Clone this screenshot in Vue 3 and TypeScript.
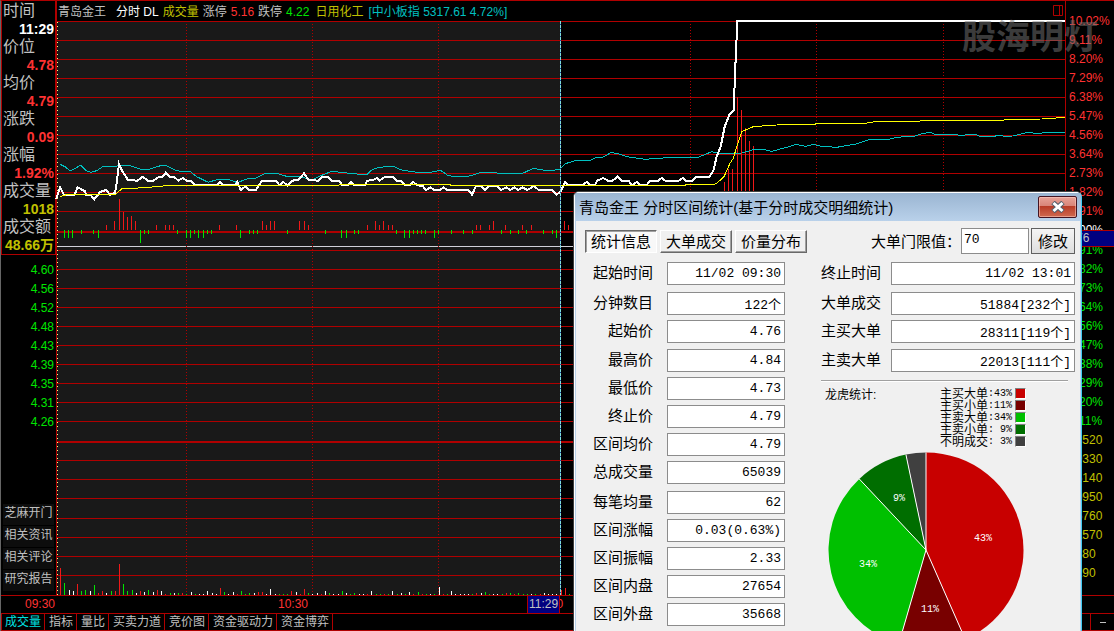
<script setup lang="ts">
import { ref } from 'vue'

type Tone = 'r' | 'g' | 'w'
interface Bar { x: number; top: number; height: number; tone: Tone }

// The plot is drawn on a grid of three units per pixel.
const upperRows = [64, 121, 178, 235, 292, 349, 406, 463, 520, 577, 634]
const lowerRows = [751, 808, 865, 922, 979, 1036, 1093, 1150, 1207, 1264]
const volumeRows = [1381, 1438, 1495, 1555, 1612, 1669, 1726]
const gridRows = [...upperRows, ...lowerRows, ...volumeRows].map((y) => Math.floor(y / 3) * 3 + 1.5)
const gridColumns = [559.5, 937.5, 1315.5, 2071.5, 2449.5, 2830.5]

const priceLine = '168,598 180,562 192,584 224,584 233,562 255,574 258,584 273,586 283,598 300,576 318,570 330,584 345,578 350,550 357,492 366,512 384,540 412,542 428,530 444,542 460,542 478,530 488,530 497,518 508,530 524,532 535,542 548,534 560,542 574,542 585,556 650,556 660,546 672,556 705,556 712,546 722,570 736,560 748,570 768,570 786,542 828,542 838,556 840,556 850,546 862,556 876,542 895,540 912,520 926,540 955,542 965,532 985,532 995,542 1016,542 1028,556 1043,556 1052,546 1062,556 1094,556 1102,542 1120,540 1130,534 1138,542 1156,530 1178,530 1190,542 1204,542 1214,556 1230,556 1240,546 1252,556 1268,558 1278,570 1292,562 1302,570 1320,570 1330,562 1342,570 1405,570 1416,584 1428,558 1444,558 1456,570 1468,558 1490,558 1504,570 1519,562 1530,570 1543,562 1555,570 1568,562 1582,570 1602,558 1616,570 1656,570 1670,584 1682,574 1696,546 1706,556 1748,556 1760,546 1770,556 1784,556 1792,542 1810,534 1824,542 1838,542 1852,530 1866,542 1886,542 1896,556 1910,546 1922,556 1940,556 1950,542 1974,542 1985,534 1996,542 2036,542 2048,534 2058,542 2076,542 2088,530 2128,530 2140,512 2150,470 2162,440 2174,380 2188,345 2201,330 2206,200 2212,63 3195,63'
const averageLine = '180,590 200,584 345,584 365,567 430,563 480,559 500,556.5 1015,556.5 1020,553.5 1350,553.5 1352,556.5 2055,556.5 2058,553.5 2140,553.5 2150,550 2172,530 2190,490 2200,475 2210,440 2225,395 2260,380 2330,375 2445,373 2448,370 2595,370 2625,365 2760,364 2762,361 3010,361 3015,358 3125,357 3195,352'
const indexLine = '180,493 195,500 210,512 225,506 238,497 244,497 258,512 272,517 290,512 310,499 340,501 357,496 388,496 420,507 450,507 485,496 500,498 530,512 550,515 572,516 590,530 625,547 650,539 690,540 712,548 745,535 765,535 795,520 830,520 860,529 900,530 936,540 960,528 995,514 1030,518 1070,522 1102,523 1115,510 1135,502 1180,499 1200,509 1250,517 1290,517 1322,511 1342,525 1355,529 1405,529 1445,517 1490,519 1570,519 1600,505 1640,512 1678,509 1696,491 1730,481 1772,481 1790,472 1810,471 1832,458 1850,460 1880,470 1935,478 1970,475 2030,472 2090,474 2135,455 2155,460 2225,459 2260,449 2295,449 2315,454 2360,442 2388,433 2418,439 2440,433 2465,439 2510,442 2550,435 2568,432 2610,418 2660,420 2690,412 2746,408 2765,401 2790,397 2805,403 2860,403 2880,406 2925,403 2940,409 2980,409 3000,406 3015,409 3038,408 3080,398 3120,400 3140,397 3195,397'

const snap = (v: number) => Math.floor(v / 3) * 3

function parse(source: string): Array<[number, number]> {
  return source.split(' ').map((pair) => {
    const [x, y] = pair.split(',').map(Number)
    return [x, y]
  })
}

const rises = '319,675 343,663 358,597 370,636 382,651 394,648 406,663 469,675 496,675 508,675 520,675 658,675 709,675 787,663 799,675 811,663 823,663 898,663 913,663 925,675 1102,675 1126,663 1138,675 1150,663 1165,675 1177,675 1429,675 1441,675 1468,675 1480,663 1516,675 1567,675 1594,675 1693,663 1705,675 2173,545 2185,507 2197,507 2212,291 2224,330 2236,384 2248,422 2260,437'
const falls = '193,713 205,713 217,713 244,702 280,702 295,713 421,728 433,702 445,702 532,702 559,713 571,713 583,702 595,713 610,713 622,702 634,702 721,713 748,702 760,702 772,702 862,702 976,702 1024,713 1039,713 1063,702 1075,702 1189,702 1213,713 1228,713 1240,702 1252,702 1264,702 1276,702 1303,713 1315,702 1354,702 1390,702 1417,702 1504,702 1531,702 1555,702 1579,702 1630,702 1657,702 1669,713'
const momentum: Bar[] = [
  ...parse(rises).map(([x, y]): Bar => ({ x: snap(x), top: y, height: 690 - y, tone: 'r' })),
  ...parse(falls).map(([x, y]): Bar => ({ x: snap(x), top: 690, height: y - 690, tone: 'g' })),
]

const volumes = 'r181,81 g193,36 w208,15 w220,12 r232,33 g244,12 g256,15 w271,12 g283,30 r295,6 r307,12 w319,6 g334,12 r346,12 r358,93 g370,33 g382,12 g397,15 w409,6 r421,12 w433,9 g445,15 w460,9 r472,15 w484,12 r496,3 g511,6 w523,6 g535,6 r547,6 g559,3 w574,9 g586,3 w598,3 w610,3 w622,12 w637,6 w649,3 r661,21 g673,9 w685,3 w700,9 r712,3 g724,12 g736,3 g748,6 w763,6 r775,9 r787,9 w799,3 w811,18 w826,3 g838,3 g850,3 g862,3 r874,12 w889,9 r901,3 r913,18 g925,6 w937,3 w952,6 r964,3 w976,12 g988,6 w1000,3 w1015,3 g1027,12 w1039,6 g1051,3 g1063,6 w1078,3 w1090,3 r1102,3 w1114,12 g1129,3 g1141,3 r1153,3 g1165,3 w1177,12 g1192,3 w1204,6 g1216,3 w1228,9 r1240,3 g1255,9 r1267,3 g1279,3 w1291,3 g1303,3 w1318,24 r1330,3 g1342,3 w1354,12 w1366,3 w1381,3 w1393,3 w1405,3 g1417,3 r1429,6 w1444,6 g1456,9 g1468,3 w1480,3 w1492,3 g1507,3 r1519,6 g1531,6 r1543,3 g1555,6 g1570,3 g1582,3 w1594,3 g1606,3 r1621,3 w1633,6 w1645,3 w1657,3 w1669,3 r1684,15 r1696,21 g1708,3'
const volumeBars: Bar[] = volumes.split(' ').map((item) => {
  const [x, height] = item.slice(1).split(',').map(Number)
  return { x: snap(x), top: 1785 - height, height, tone: item[0] as Tone }
})

const readings = [
  { label: '时间', value: '11:29', tone: 'white' },
  { label: '价位', value: '4.78', tone: 'red' },
  { label: '均价', value: '4.79', tone: 'red' },
  { label: '涨跌', value: '0.09', tone: 'red' },
  { label: '涨幅', value: '1.92%', tone: 'red' },
  { label: '成交量', value: '1018', tone: 'yellow' },
  { label: '成交额', value: '48.66万', tone: 'yellow' },
]
const prices = ['4.60', '4.56', '4.52', '4.48', '4.43', '4.39', '4.35', '4.31', '4.26']
const shortcuts = ['芝麻开门', '相关资讯', '相关评论', '研究报告']
const gains = ['10.02%', '9.11%', '8.20%', '7.29%', '6.38%', '5.47%', '4.56%', '3.64%', '2.73%', '1.82%', '0.91%']
const losses = ['0.91%', '1.82%', '2.73%', '3.64%', '4.56%', '5.47%', '6.38%', '7.29%', '8.20%', '9.11%']
const volumeScale = ['33520', '29330', '25140', '20950', '16760', '12570', '8380', '4190']
const indicatorTabs = ['成交量', '指标', '量比', '买卖力道', '竞价图', '资金驱动力', '资金博弈']
const activeIndicator = ref('成交量')

const dialogTabs = ['统计信息', '大单成交', '价量分布']
const activeTab = ref('统计信息')
const threshold = ref('70')

const leftGroups = [
  [['起始时间', '11/02 09:30']],
  [['分钟数目', '122个'], ['起始价', '4.76']],
  [['最高价', '4.84'], ['最低价', '4.73'], ['终止价', '4.79'], ['区间均价', '4.79'], ['总成交量', '65039']],
  [['每笔均量', '62'], ['区间涨幅', '0.03(0.63%)'], ['区间振幅', '2.33'], ['区间内盘', '27654'], ['区间外盘', '35668']],
]
const rightGroups = [
  [['终止时间', '11/02 13:01']],
  [['大单成交', '51884[232个]'], ['主买大单', '28311[119个]']],
  [['主卖大单', '22013[111个]']],
]

const slices = [
  { name: '主买大单', share: '43%', color: '#c80000', from: 0, to: 43.4, x: 155, y: 89 },
  { name: '主买小单', share: '11%', color: '#780000', from: 43.4, to: 54.5, x: 102, y: 160 },
  { name: '主卖大单', share: '34%', color: '#00c000', from: 54.5, to: 88, x: 40, y: 115 },
  { name: '主卖小单', share: '9%', color: '#006e00', from: 88, to: 96.7, x: 71, y: 49 },
  { name: '不明成交', share: '3%', color: '#404040', from: 96.7, to: 100, x: 0, y: 0 },
]
function rim(percent: number): string {
  const a = (percent / 100) * Math.PI * 2
  return `${(98 + 97.5 * Math.sin(a)).toFixed(2)} ${(98 - 97.5 * Math.cos(a)).toFixed(2)}`
}
const wedge = (from: number, to: number) => `M98 98L${rim(from)}A97.5 97.5 0 0 1 ${rim(to)}Z`
</script>

<template>
  <main class="terminal">
    <aside class="side">
      <dl class="readings">
        <template v-for="r in readings" :key="r.label">
          <dt>{{ r.label }}</dt>
          <dd :class="r.tone">{{ r.value }}</dd>
        </template>
      </dl>
      <ul class="prices">
        <li v-for="p in prices" :key="p">{{ p }}</li>
      </ul>
      <nav class="shortcuts">
        <button v-for="s in shortcuts" :key="s" type="button">{{ s }}</button>
      </nav>
    </aside>

    <header class="quote">
      <span class="stock">青岛金王</span>
      <span class="white">分时 DL</span>
      <span class="yellow">成交量</span>
      <span>涨停</span>
      <span class="red">5.16</span>
      <span>跌停</span>
      <span class="green">4.22</span>
      <span class="yellow sector">日用化工</span>
      <span class="cyan">[中小板指 5317.61 4.72%]</span>
      <svg class="pane-icon" viewBox="0 0 10 11" width="10" height="11" aria-hidden="true">
        <path d="M.5 .5h9v10h-9zM6.5 .5v10" />
      </svg>
    </header>

    <svg class="plot" viewBox="171 63 3024 1722" preserveAspectRatio="none" role="img" aria-label="分时走势">
      <rect class="selected" x="171" y="66" width="1509" height="1719" />
      <line v-for="y in gridRows" :key="y" class="grid" x1="171" x2="3195" :y1="y" :y2="y" />
      <rect class="axis" x="171" y="693" width="3024" height="6" />
      <rect class="axis" x="171" y="1323" width="3024" height="6" />
      <line class="divider" x1="171" x2="3195" y1="739.5" y2="739.5" />
      <line v-for="x in gridColumns" :key="x" class="dotted" :x1="x" :x2="x" y1="72" y2="1785" />
      <line class="origin" x1="172.5" x2="172.5" y1="66" y2="1785" />
      <rect v-for="b in momentum" :key="'m' + b.x + b.tone" :class="b.tone" :x="b.x" :y="b.top" width="3" :height="b.height" />
      <rect v-for="b in volumeBars" :key="'v' + b.x" :class="b.tone" :x="b.x" :y="b.top" width="3" :height="b.height" />
      <polyline class="index" :points="indexLine" />
      <polyline class="price" :points="priceLine" />
      <polyline class="average" :points="averageLine" />
      <line class="cursor-base" x1="1681.5" x2="1681.5" y1="63" y2="1785" />
      <line class="cursor" x1="1681.5" x2="1681.5" y1="63" y2="1785" />
    </svg>

    <aside class="scale">
      <ul>
        <li v-for="g in gains" :key="'g' + g" class="red">{{ g }}</li>
        <li class="white zero">0.00%</li>
        <li v-for="l in losses" :key="'l' + l" class="green">{{ l }}</li>
        <li v-for="v in volumeScale" :key="v" class="yellow">{{ v }}</li>
      </ul>
      <output class="cursor-price">4.76</output>
    </aside>

    <div class="times">
      <span class="t0">09:30</span>
      <span class="t1">10:30</span>
      <span class="t2">11:30</span>
      <output class="cursor-time">11:29</output>
    </div>

    <footer class="tabs">
      <button
        v-for="t in indicatorTabs"
        :key="t"
        type="button"
        :class="{ active: t === activeIndicator }"
        @click="activeIndicator = t"
      >{{ t }}</button>
      <button class="minus" type="button" aria-label="缩小"><i></i></button>
    </footer>

    <div class="watermark">股海明灯</div>

    <section class="dialog" role="dialog" aria-labelledby="dialog-title">
      <header class="title">
        <h1 id="dialog-title">青岛金王 分时区间统计(基于分时成交明细统计)</h1>
        <button class="close" type="button" aria-label="关闭">
          <svg viewBox="0 0 14 12" width="14" height="12" aria-hidden="true">
            <path class="edge" d="M2 1.500l10 9M12 1.500l-10 9" />
            <path class="cross" d="M2.500 2l9 8M11.500 2l-9 8" />
          </svg>
        </button>
      </header>
      <div class="toolbar">
        <button
          v-for="t in dialogTabs"
          :key="t"
          type="button"
          class="tab"
          :class="{ pressed: t === activeTab }"
          @click="activeTab = t"
        >{{ t }}</button>
        <label for="threshold">大单门限值：</label>
        <input id="threshold" v-model="threshold" type="text" />
        <button class="apply" type="button">修改</button>
      </div>
      <div class="columns">
        <div class="fields left">
          <div v-for="(group, g) in leftGroups" :key="g" class="group">
            <div v-for="(f, i) in group" :key="f[0]" class="field">
              <label :for="`l${g}-${i}`">{{ f[0] }}</label>
              <input :id="`l${g}-${i}`" type="text" readonly :value="f[1]" />
            </div>
          </div>
        </div>
        <div class="right">
          <div class="fields">
            <div v-for="(group, g) in rightGroups" :key="g" class="group">
              <div v-for="(f, i) in group" :key="f[0]" class="field">
                <label :for="`r${g}-${i}`">{{ f[0] }}</label>
                <input :id="`r${g}-${i}`" type="text" readonly :value="f[1]" />
              </div>
            </div>
          </div>
          <hr />
          <div class="summary">
            <h2>龙虎统计:</h2>
            <ul class="legend">
              <li v-for="s in slices" :key="s.name">
                <span>{{ s.name }}</span><b>:</b><b class="share">{{ s.share }}</b>
                <i :style="{ background: s.color }"></i>
              </li>
            </ul>
          </div>
          <svg class="pie" viewBox="0 0 196 196" width="196" height="196" role="img" aria-label="龙虎统计">
            <path v-for="s in slices" :key="s.name" :d="wedge(s.from, s.to)" :fill="s.color" />
            <path v-for="s in slices" :key="'e' + s.name" class="spoke" :d="`M98 98L${rim(s.from)}`" />
            <template v-for="s in slices" :key="'t' + s.name">
              <text v-if="s.x" :x="s.x" :y="s.y">{{ s.share }}</text>
            </template>
          </svg>
        </div>
      </div>
    </section>
  </main>
</template>

<style>
body {
  margin: 0;
  background: #000;
}
</style>

<style scoped>
.terminal {
  --line: #b00000;
  box-sizing: border-box;
  position: relative;
  display: grid;
  grid-template-columns: 56px minmax(0, 1fr) 49px;
  grid-template-rows: 20px minmax(0, 1fr) 18px 18px;
  height: 100vh;
  min-height: 620px;
  overflow: hidden;
  border-top: 1px solid var(--line);
  border-left: 1px solid #666;
  background: #000;
  color: #c0c0c0;
  font: 12px/19px "Liberation Sans", "Noto Sans CJK SC", sans-serif;
}
ul, dl, dd, h1, h2 {
  margin: 0;
  padding: 0;
  list-style: none;
  font-weight: normal;
}
button {
  padding: 0;
  border: 0;
  background: none;
  color: inherit;
  font: inherit;
}
.red { color: #ff3232; }
.green { color: #00e600; }
.yellow { color: #c0c000; }
.white { color: #fff; }
.cyan { color: #00c0c0; }

.side {
  grid-area: 1 / 1 / 3 / 2;
  display: flex;
  flex-direction: column;
  border-right: 1px solid var(--line);
}
.readings {
  padding: 1px 1px 0 1px;
  border: 1px solid var(--line);
  border-top: 0;
  line-height: 18px;
}
.readings dt { font-size: 16px; }
.readings dd {
  font-size: 14px;
  font-weight: bold;
  text-align: right;
  white-space: nowrap;
}
.prices {
  padding: 6px 2px 0 0;
  color: #00e600;
  text-align: right;
}
.shortcuts {
  display: flex;
  flex-direction: column;
  gap: 1px;
  margin: auto 2px 4px;
}
.shortcuts button {
  height: 21px;
  padding: 0 0 3px;
  background: #0d0d0d;
  line-height: 18px;
  white-space: nowrap;
}

.quote {
  grid-area: 1 / 2;
  display: flex;
  gap: 4px;
  padding-left: 1px;
  line-height: 22px;
  white-space: nowrap;
}
.stock { margin-right: 6px; }
.sector { margin: 0 1px 0 2px; }
.pane-icon {
  margin: 4px 2px 0 auto;
  fill: none;
  stroke: var(--line);
}
.plot {
  grid-area: 2 / 2;
  width: 100%;
  height: 100%;
  overflow: visible;
  shape-rendering: crispEdges;
}
.plot .selected { fill: #191919; }
.plot .grid { stroke: var(--line); stroke-width: 3; }
.plot .axis { fill: var(--line); }
.plot .divider { stroke: #d0d0d8; stroke-width: 3; }
.plot .dotted { stroke: var(--line); stroke-width: 3; stroke-dasharray: 3 6; }
.plot .origin { stroke: #ffff80; stroke-width: 3; stroke-dasharray: 3 9; }
.plot .r { fill: #f01818; }
.plot .g { fill: #00e600; }
.plot .w { fill: #fff; }
.plot polyline { fill: none; stroke-width: 3; }
.plot .price { stroke: #fff; stroke-width: 6; }
.plot .average { stroke: #ff0; }
.plot .index { stroke: #00c0c0; }
.plot .cursor-base { stroke: #1e3ca0; stroke-width: 3; }
.plot .cursor { stroke: #80e0d8; stroke-width: 3; stroke-dasharray: 9 3; }

.scale {
  grid-area: 1 / 3 / 3 / 4;
  position: relative;
  border-left: 1px solid var(--line);
}
.scale ul { padding: 11px 0 0 3px; }
.scale li { height: 19px; }
.scale .zero { height: 20px; }
.cursor-price {
  position: absolute;
  top: 229px;
  left: 0;
  right: 0;
  border: solid var(--line);
  border-width: 1px 0;
  background: #000080;
  line-height: 15px;
}

.times {
  grid-area: 3 / 1 / 4 / 4;
  position: relative;
  border-top: 1px solid var(--line);
  color: #ff3232;
  line-height: 16px;
}
.times span,
.cursor-time { position: absolute; }
.t0 { left: 24px; }
.t1 { left: 277px; }
.t2 { left: 533px; }
.cursor-time {
  left: 526px;
  padding: 0 1px;
  border: solid var(--line);
  border-width: 0 1px;
  background: #000080;
  color: #c0c0c0;
  line-height: 17px;
}

.tabs {
  grid-area: 4 / 1 / 5 / 4;
  display: flex;
  border: solid var(--line);
  border-width: 1px 0 1px 1px;
  line-height: 16px;
}
.tabs button {
  padding: 0 3px;
  border-right: 1px solid var(--line);
  white-space: nowrap;
}
.tabs button:not(:first-child) { padding-left: 4px; }
.tabs .active { color: #00e0e0; }
.tabs .minus {
  display: flex;
  align-items: center;
  justify-content: center;
  width: 24px;
  margin-left: auto;
  border-right: 0;
  border-left: 1px solid var(--line);
}
.minus i {
  width: 6px;
  height: 1px;
  background: #c0c0c0;
}

.watermark {
  position: absolute;
  top: 12px;
  right: 16px;
  color: rgba(112, 112, 112, 0.55);
  font-size: 34px;
  font-weight: bold;
  line-height: 48px;
  pointer-events: none;
}

.dialog {
  box-sizing: border-box;
  position: absolute;
  top: 190px;
  right: 32px;
  bottom: 0;
  width: 509px;
  overflow: hidden;
  border: 1px solid #404040;
  border-right-color: #40c8f0;
  border-bottom: 0;
  border-radius: 6px 6px 0 0;
  background: #f0f0f0;
  box-shadow: inset 1px 0 #fff, inset 2px 0 #b9d1ea, inset -1px 0 #b9d1ea;
  color: #000;
  font-size: 15px;
}
.title {
  display: flex;
  align-items: flex-start;
  justify-content: space-between;
  height: 29px;
  padding: 0 4px 0 5px;
  background: linear-gradient(#99b4d1, #b9d1ea);
  box-shadow: inset 0 1px #fff, inset 1px 0 #fff;
}
.title h1 {
  font-size: 15px;
  line-height: 31px;
  white-space: nowrap;
}
.close {
  display: flex;
  align-items: center;
  justify-content: center;
  box-sizing: border-box;
  width: 39px;
  height: 22px;
  margin-top: 4px;
  border: 1px solid #431422;
  border-radius: 2px;
  background: linear-gradient(#e8a298 0, #d88478 45%, #b83a26 46%, #cf6a50 100%);
  box-shadow: inset 0 0 0 1px rgba(255, 210, 200, 0.5);
}
.close path { fill: none; }
.close .edge { stroke: #55606e; stroke-width: 5; }
.close .cross { stroke: #fff; stroke-width: 3; }

.toolbar {
  display: flex;
  align-items: center;
  height: 28px;
  padding: 6px 6px 7px 11px;
  white-space: nowrap;
}
.toolbar .tab {
  box-sizing: border-box;
  width: 72px;
  height: 23px;
  margin-right: 3px;
  border: 1px solid;
  border-color: #fff #696969 #696969 #fff;
  box-shadow: inset -1px -1px #a0a0a0;
  line-height: 21px;
}
.toolbar .pressed {
  border-color: #696969 #fff #fff #696969;
  background: #f8f8f8;
  box-shadow: inset 1px 1px #a0a0a0;
}
.toolbar label { margin-left: auto; }
input {
  box-sizing: border-box;
  min-width: 0;
  margin: 0;
  border: 1px solid #8c8c8c;
  border-radius: 0;
  outline: 0;
  background: #fff;
  color: #000;
  font: 13px "Liberation Mono", "Noto Sans CJK SC", monospace;
}
#threshold {
  width: 68px;
  height: 26px;
  padding: 0 2px 3px;
}
.apply {
  box-sizing: border-box;
  width: 44px;
  height: 26px;
  margin-left: 2px;
  border: 1px solid #606060;
  background: linear-gradient(#f4f4f4, #dedede);
}

.columns {
  display: flex;
  gap: 36px;
  padding: 0 6px 0 11px;
}
.left { width: 200px; }
.right { flex: 1; min-width: 0; }
.group {
  display: grid;
  grid-template-columns: minmax(0, 1fr);
  gap: 5px;
  margin-bottom: 7px;
}
.group:nth-child(2) { margin-bottom: 6px; }
.field {
  display: flex;
  gap: 10px;
  height: 23px;
  line-height: 22px;
}
.field label {
  width: 60px;
  text-align: right;
  white-space: nowrap;
}
.field input {
  flex: 1;
  padding: 0 3px;
  text-align: right;
}
.left .field { gap: 14px; }
.left .field label { width: 68px; }
hr {
  height: 1px;
  margin: 8px 7px 6px 0;
  border: 0;
  border-top: 1px solid #a0a0a0;
  background: #fff;
}
.summary {
  display: flex;
  justify-content: space-between;
  padding: 0 49px 0 4px;
  font-size: 12px;
  line-height: 12px;
}
.summary h2 { font-size: 12px; line-height: 15px; }
.legend li { display: flex; height: 12px; }
.legend b {
  width: 6px;
  font: 10px/12px "Liberation Mono", monospace;
}
.legend .share { width: 18px; text-align: right; }
.legend i {
  box-sizing: border-box;
  width: 11px;
  height: 11px;
  margin-left: 3px;
  border: 1px solid;
  border-color: #808080 #fff #fff #808080;
}
.pie {
  display: block;
  margin: 4px 0 0 7px;
}
.pie .spoke { stroke: #fff; }
.pie text {
  fill: #fff;
  font: 10px "Liberation Mono", monospace;
  text-anchor: middle;
}
</style>
